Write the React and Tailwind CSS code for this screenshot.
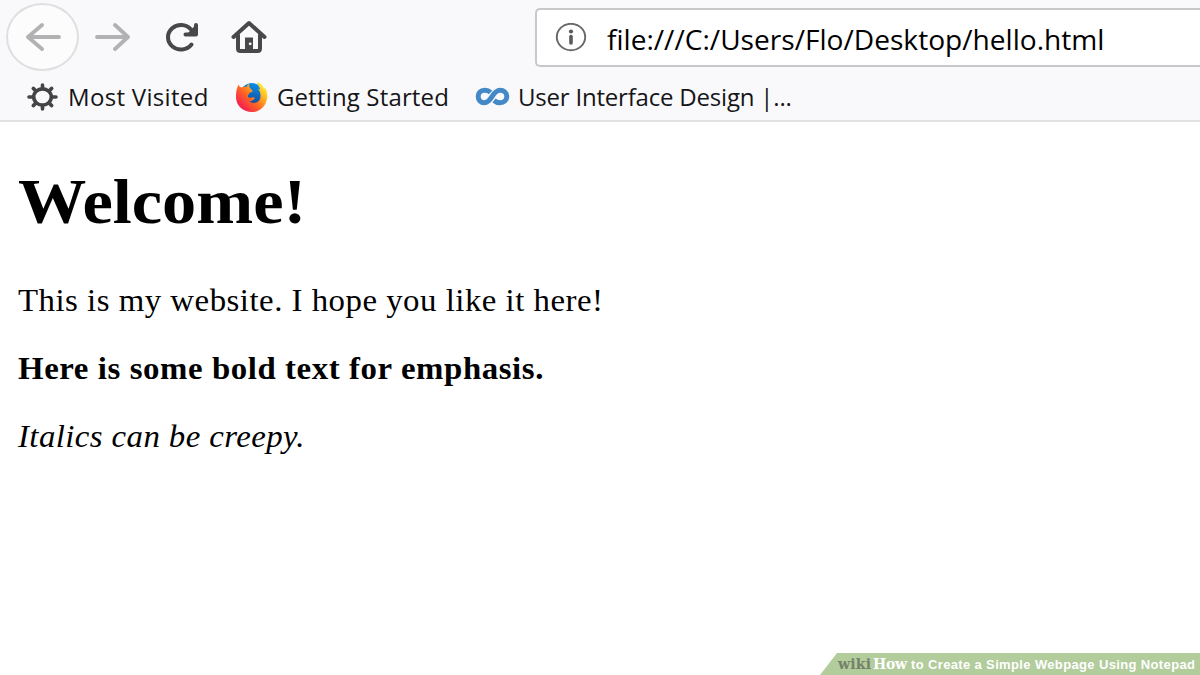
function BackIcon() {
  return (
    <svg className="h-[28px] w-[36px]" viewBox="0 0 36 28" fill="none" stroke="#b2b2b4" strokeWidth="3.8" strokeLinecap="round" strokeLinejoin="round">
      <path d="M34 14H3M17 2L3 14L17 26" />
    </svg>
  );
}

function ForwardIcon() {
  return (
    <svg className="h-[28px] w-[36px]" viewBox="0 0 36 28" fill="none" stroke="#b2b2b4" strokeWidth="3.8" strokeLinecap="round" strokeLinejoin="round">
      <path d="M2 14H33M20 2L33 14L20 26" />
    </svg>
  );
}

function ReloadIcon() {
  return (
    <svg className="h-[32px] w-[36px]" viewBox="0 0 36 32" fill="none" stroke="#48484a" strokeWidth="4" strokeLinecap="round" strokeLinejoin="round">
      <path d="M27.5 23.5A13 12.2 0 1 1 27 8.5L30 12" />
      <path d="M32 4V13.5H21.5" />
      <path d="M31 6V12.5H25Z" fill="#48484a" strokeWidth="2" />
    </svg>
  );
}

function HomeIcon() {
  return (
    <svg className="h-[34px] w-[36px]" viewBox="0 0 36 34" fill="none" stroke="#48484a" strokeWidth="4" strokeLinecap="round" strokeLinejoin="round">
      <path d="M2.5 17L18 3L33.5 17" />
      <path d="M7 15V28.5Q7 31 9.500 31H26.500Q29 31 29 28.500V15" />
      <path d="M14 17.500H22V31H14Z" fill="#48484a" stroke="none" />
      <circle cx="19.200" cy="23.800" r="1.400" fill="#fff" stroke="none" />
    </svg>
  );
}

function GearIcon() {
  return (
    <svg className="h-[28px] w-[31px]" viewBox="-15.500 -14 31 28" fill="none" stroke="#444446" strokeLinecap="round">
      <ellipse rx="8.800" ry="8.100" strokeWidth="3.600" />
      <path strokeWidth="3.600" d="M0 -12V-9M0 12V9M-13.500 0H-10M13.500 0H10M-9.200 -8.600L-7 -6.500M9.200 -8.600L7 -6.500M-9.200 8.600L-7 6.500M9.200 8.600L7 6.500" />
    </svg>
  );
}

function FirefoxIcon() {
  return (
    <svg className="h-[32px] w-[33px]" viewBox="0 0 33 32">
      <defs>
        <linearGradient id="flame" x1="0.900" y1="0.100" x2="0.150" y2="0.800">
          <stop offset="0" stopColor="#fff044" />
          <stop offset="0.250" stopColor="#ffbd22" />
          <stop offset="0.600" stopColor="#ff6a20" />
          <stop offset="1" stopColor="#f5224f" />
        </linearGradient>
        <linearGradient id="globe" x1="0.600" y1="0" x2="0.400" y2="1">
          <stop offset="0" stopColor="#0a90e8" />
          <stop offset="1" stopColor="#153f91" />
        </linearGradient>
      </defs>
      <ellipse cx="17" cy="14" rx="12" ry="12" fill="url(#globe)" />
      <path fill="url(#flame)" d="M3.500 3.500C4 5 5 6 6.500 6.500C8 5.500 10 5.500 11.500 6C12 4 13 3 14.500 2.500C13.500 5 14.500 7 17 9C18 10 17.500 11 15.500 11.500C13.500 12 14 13.500 13 14.500C12.500 16 13.500 17 15.500 16.800C17.500 16.500 18.500 15.500 20 17C19 19.500 16 20.500 14 20C17 23 22 22.500 24.500 19C26.500 15 25.500 11 23 8C24 8 24.500 8.500 25 9C25 6 22.500 4.500 22 1C25.500 2 28 4.500 29 8C29.500 7 29.500 6.500 29.500 6C32 9 33 14 32 18C30.500 26 24.500 31 17 31C8 31 1 24.500 1 16C1 11 1.500 8 3.500 3.500Z" />
    </svg>
  );
}

function InfinityIcon() {
  return (
    <svg className="h-[20px] w-[35px]" viewBox="0 0 35 20" fill="none" stroke="#4389c8" strokeWidth="5" strokeLinecap="butt">
      <path d="M15.500 5.500C13.500 3.500 11.500 3.300 9.500 3.300C5.700 3.300 3.200 6 3.200 9.500C3.200 13 5.700 15.700 9.500 15.700C17 15.700 17 3.300 25 3.300C29 3.300 31.800 6 31.800 9.500C31.800 13 29 15.700 25 15.700C22.500 15.700 20.500 14.800 19 13.500" />
    </svg>
  );
}

function InfoIcon() {
  return (
    <svg className="h-[30px] w-[32px]" viewBox="0 0 32 30" fill="none" stroke="#68686a">
      <ellipse cx="16" cy="14" rx="14.200" ry="13.200" strokeWidth="1.900" />
      <circle cx="16" cy="8.500" r="2.100" fill="#5a5a5c" stroke="none" />
      <path d="M16 13.500V20" strokeWidth="3.600" stroke="#5a5a5c" strokeLinecap="round" />
    </svg>
  );
}

function Toolbar() {
  return (
    <div className="flex h-[76px] items-start">
      <div className="ml-[6px] mt-[3px] flex h-[68px] w-[73px] shrink-0 items-center justify-center rounded-[50%] border-2 border-[#dfdfe1] bg-[#fcfcfd]">
        <BackIcon />
      </div>
      <div className="ml-[16px] mt-[23px] shrink-0"><ForwardIcon /></div>
      <div className="ml-[33px] mt-[21px] shrink-0"><ReloadIcon /></div>
      <div className="ml-[31px] mt-[20px] shrink-0"><HomeIcon /></div>
      <div className="ml-[268px] mt-[8px] flex h-[59px] grow items-center rounded-l-[5px] border-2 border-r-0 border-[#c8c8ca] bg-white pl-[18px]">
        <InfoIcon />
        <span className="ml-[20px] mt-[4px] origin-left scale-x-[1.041] whitespace-nowrap text-[27px] leading-[36px] text-black">file:///C:/Users/Flo/Desktop/hello.html</span>
      </div>
    </div>
  );
}

function Bookmarks() {
  return (
    <div className="flex h-[45px] items-start whitespace-nowrap text-[24px] leading-[34px] text-[#151517]">
      <div className="ml-[27px] mt-[7px]"><GearIcon /></div>
      <span className="ml-[10px] mt-[4px] w-[167px] tracking-[0.320px]">Most Visited</span>
      <div className="mt-[5px]"><FirefoxIcon /></div>
      <span className="ml-[9px] mt-[4px] w-[198px] tracking-[0.160px]">Getting Started</span>
      <div className="mt-[11px]"><InfinityIcon /></div>
      <span className="ml-[8px] mt-[4px] tracking-[-0.200px]">User Interface Design |...</span>
    </div>
  );
}

export default function App() {
  return (
    <div className="flex h-[675px] w-[1200px] flex-col overflow-hidden bg-white font-['Open_Sans','Noto_Sans',sans-serif]">
      <header className="h-[122px] shrink-0 border-b-2 border-[#e1e1e3] bg-[#f9f9fb]">
        <Toolbar />
        <Bookmarks />
      </header>
      <main className="grow whitespace-nowrap pl-[18px] font-['Liberation_Serif',serif] text-black">
        <h1 className="mt-[43px] w-max origin-left scale-x-[1.067] text-[64px] font-bold leading-[74px]">Welcome!</h1>
        <p className="mt-[44px] w-max origin-left scale-x-[1.060] text-[31px] leading-[36px] tracking-[0.460px]">This is my website. I hope you like it here!</p>
        <p className="mt-[32px] w-max origin-left scale-x-[1.060] text-[31px] font-bold leading-[36px] tracking-[0.540px]">Here is some bold text for emphasis.</p>
        <p className="mt-[32px] w-max origin-left scale-x-[1.060] text-[31px] italic leading-[36px] tracking-[0.380px]">Italics can be creepy.</p>
      </main>
      <footer className="flex h-[22px] w-[380px] shrink-0 items-center self-end whitespace-nowrap bg-[#b2cc9c] pl-[18px] text-white [clip-path:polygon(17px_0,100%_0,100%_100%,0_100%)]">
        <span className="w-[35px] pt-px font-['DejaVu_Serif',serif] text-[14px] font-bold tracking-[0.200px] text-[#738269]">wiki</span>
        <span className="w-[38px] pt-px font-['DejaVu_Serif',serif] text-[14px] font-bold tracking-[-0.300px]">How</span>
        <span className="pt-px font-['Liberation_Sans',sans-serif] text-[13px] font-bold tracking-[0.360px]">to Create a Simple Webpage Using Notepad</span>
      </footer>
    </div>
  );
}
